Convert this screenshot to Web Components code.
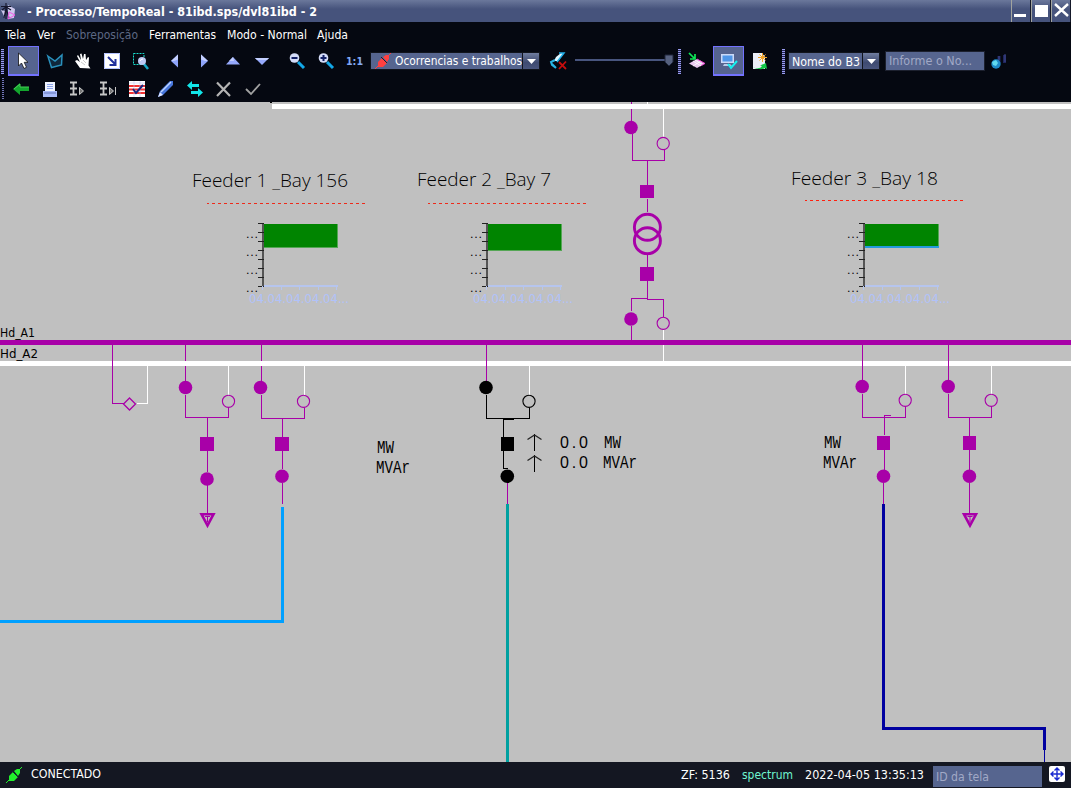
<!DOCTYPE html>
<html lang="pt-BR">
<head>
<meta charset="utf-8">
<title>Processo/TempoReal</title>
<style>
html,body{margin:0;height:100%;overflow:hidden;background:#050811}
</style>
</head>
<body>
<app-window></app-window>
<script>
const UI = '"DejaVu Sans Condensed","DejaVu Sans",sans-serif';

// One line of text fitted to a given width.
const line = (s, x, y, w, size, fill, extra = '', adjust = 'spacingAndGlyphs') =>
  `<text x="${x}" y="${y}" textLength="${w}" lengthAdjust="${adjust}" font-size="${size}" fill="${fill}" ${extra}>${s}</text>`;

class Base extends HTMLElement {
  connectedCallback() {
    if (this.shadowRoot) return;
    this.attachShadow({mode: 'open'}).innerHTML = `<style>${this.css()}</style>${this.html()}`;
  }
  num(n, d = 0) { return this.hasAttribute(n) ? +this.getAttribute(n) : d; }
}

class FitText extends Base {
  css() { return `:host{display:block;flex:none;width:${this.num('w')}px;height:${this.num('h', 22)}px;margin-right:${this.num('gap')}px}
    svg{display:block;overflow:visible;font-family:${UI}}`; }
  html() {
    const bold = this.hasAttribute('bold') ? 'font-weight="bold"' : '';
    return `<svg width="${this.num('w')}" height="${this.num('h', 22)}">${line(this.getAttribute('label'), 0, this.num('base', 16), this.num('w'), this.num('size', 12), this.getAttribute('color') || '#fff', bold)}</svg>`;
  }
}

// Glyphs are drawn on a 16x16 grid.
const lens = '<path d="M9 9l6 6" stroke="#12a8e8" stroke-width="3"/><circle cx="5.500" cy="5" r="4.800" fill="#d4dcf8"/>';
const plug = '<path d="M0 16L4 12M12 4l4-4" stroke="currentColor" stroke-width="1"/><path d="M3 9l4-4 5 5-4 4H3zM8 4l3-2 3 0v4l-2 3z" fill="currentColor"/><path d="M6 4l6 6" stroke="#123" stroke-width="1"/>';
const ICONS = {
  app: '<path d="M8 2l7 4-1 9-6 1zM1 7l4 1v7z" fill="#cdc8ec"/><path d="M1 3.500h10M6 0v16M2 7l4-3 5 3M4 15l2-10 3 10" stroke="#14152a" stroke-width="1.100" fill="none"/><path d="M8 16l7-4-6-3z" stroke="#f05ae4" fill="none"/>',
  cursor: '<path d="M2.500 0v13l3-3 2.500 5.500 2.500-1.200-2.300-5H12z" fill="#fff" stroke="#111" stroke-width=".8"/>',
  lasso: '<path d="M.8 3L8 8l7-6-.5 10-10 2.500z" fill="#10283c" stroke="#2a91bd" stroke-width="1.500"/>',
  hand: '<path d="M5 15L0 8l2-1 3 2L2 3l1-1 3 5-1-6 1.500-.5L8 6l1-5h1.500L11 7l2-3 1 .5-.5 8 2 3z" fill="#fff"/><path d="M6 9l4 3M8 7l3 3" stroke="#aaa" stroke-width=".6"/>',
  box: '<path d="M0 0h16v16H0z" fill="#fff"/><path d="M.5.5h15v15H.5z" fill="none" stroke="#b4c2ff"/><path d="M4 4l7 7M11.500 6v6h-6" stroke="#20309c" stroke-width="2" fill="none"/>',
  region: '<path d="M.5.500h10.500v11H.5z" fill="none" stroke="#18e0d0" stroke-dasharray="2 1"/><path d="M11 11l4 5" stroke="#15a8c8" stroke-width="2.500"/><circle cx="9" cy="8" r="4" fill="#bcc8f4"/><path d="M7 8a3 3 0 0 1 3-2" stroke="#fff" fill="none"/>',
  left: '<path d="M11 1.500v13L4 8z" fill="#8fa4fa"/><path d="M11 1.500v5L7 8 4 8z" fill="#c3cfff"/>',
  right: '<path d="M5 1.500v13L12 8z" fill="#8fa4fa"/><path d="M5 1.500v5L9 8 12 8z" fill="#c3cfff"/>',
  up: '<path d="M1 11.500h14L8 4z" fill="#96a9fc"/><path d="M8 4L4 8h5z" fill="#c3cfff"/>',
  down: '<path d="M1 5h14L8 12z" fill="#96a9fc"/><path d="M1 5h14l-2 2H3z" fill="#c3cfff"/>',
  minus: lens + '<path d="M2.500 5h6" stroke="#111e64" stroke-width="2"/>',
  plus: lens + '<path d="M2.500 5h6M5.500 2v6" stroke="#111e64" stroke-width="2"/>',
  plug,
  pen: '<path d="M5 4l5-4h3L7 8 3 8z" fill="#dff6ff"/><path d="M8 0h5L6 9" stroke="#20aee8" stroke-width="1.500" fill="none"/><path d="M4 7L0 9l1 3 4 3M1 11l4 4" stroke="#27b4e5" stroke-width="2" fill="none"/><path d="M8 9l7 7M15 8.500L8 16" stroke="#c60d0d" stroke-width="1.800"/>',
  layer: '<path d="M0 10.500l8-4.500 8 4.500-8 4.500z" fill="#eac9ef"/><path d="M4 8l8 5M6 7l8 5M4 13l8-5" stroke="#fff" stroke-width=".8"/><path d="M8 6l8 4.500-4 2" stroke="#f044d4" fill="none"/><path d="M0 0l5 5M6 1v5H1" stroke="#0ee957" stroke-width="1.700" fill="none"/>',
  screen: '<path d="M0 1h13v9H0z" fill="#cbd9f7"/><path d="M1.500 2.500h10v6h-10z" fill="#4f96e8"/><path d="M3 11h6l2 2H2z" fill="#b8c8e8"/><path d="M7 11l3 4 6-7" stroke="#14f1ef" stroke-width="2" fill="none"/>',
  page: '<path d="M1 0h9l3 4v12H1z" fill="#eceff8"/><path d="M10.500 0v9M6 4.500h9M7.500 1.500l6 6M13.500 1.500l-6 6" stroke="#f4a425" stroke-width="1"/><path d="M0 14q8 3 10-1l-2-.5 6-2.500 1 6-2-1q-4 3-13-1" fill="#14c747"/>',
  find: '<path d="M6.500 3h3v7h-3zM12 2h3v8h-3z" fill="#20255e"/><path d="M8 3v4M14 1v8" stroke="#3f4b8d"/><circle cx="5" cy="11" r="4.700" fill="#1e8ac8"/><path d="M1 9l4-2 2 3-2 3-3-1z" fill="#60d9ef"/>',
  back: '<path d="M0 8l7-6v4h9v4H7v4z" fill="#13a52d"/><path d="M1 8l6-5v3h9" stroke="#47cf58" fill="none"/>',
  print: '<path d="M3 1h10v10H3z" fill="#eff3ff"/><path d="M5 3.500h6M5 5.500h6M5 7.500h6" stroke="#8ba2eb"/><path d="M1 10h14v6H1z" fill="#a9baf8"/><path d="M2 12h12" stroke="#6476ba"/>',
  tree1: '<path d="M0 1.500h7M0 7.500h7M0 13.500h7M3.500 2v11" stroke="#c8c8c8" stroke-width="1.800" fill="none"/><path d="M9.500 6.500v7l4-3.500z" fill="#777" stroke="#c8c8c8"/>',
  tree2: '<path d="M0 1.500h7M0 7.500h7M0 13.500h7M3.500 2v11" stroke="#c8c8c8" stroke-width="1.800" fill="none"/><path d="M9.500 6.500v7l4-3.500zM15.500 6v8" fill="#777" stroke="#c8c8c8"/>',
  table: '<path d="M0 0h16v16H0z" fill="#fff"/><path d="M0 5h16M0 8.500h16M0 12h16" stroke="#f33232" stroke-width="2"/><path d="M0 2h16M5 0v16M11 0v16" stroke="#c2c8f0" stroke-width=".6"/><path d="M4 8l3 4 7-8" stroke="#18247f" stroke-width="2" fill="none"/>',
  pencil: '<path d="M0 16l2-6L12 0h3v4L5 14z" fill="#4776dc"/><path d="M3 11L13 1" stroke="#bed4ff" stroke-width="1.500"/><path d="M0 16l2-5 3 3z" fill="#dde4ff"/>',
  swap: '<path d="M3 4.500h9M4 11.500h9" stroke="#12e6e9" stroke-width="3" fill="none"/><path d="M0 4.500L5 0v9zM16 11.500L11 7v9z" fill="#12e6e9"/>',
  cross: '<path d="M1 1.500L14 15M14 1.500L1 15" stroke="#b4b4b4" stroke-width="2.200"/>',
  tick: '<path d="M1 8l5 5 9-10" stroke="#a2a2a2" stroke-width="1.800" fill="none"/>',
  move: '<rect width="16" height="16" rx="2" fill="#fff"/><path d="M8 2v12M2 8h12M5.500 4.500L8 2l2.500 2.500M5.500 11.500L8 14l2.500-2.500M4.500 5.500L2 8l2.500 2.500M11.500 5.500L14 8l-2.500 2.500" stroke="#1828d0" stroke-width="1.400" fill="none"/>'
};
class ToolIcon extends Base {
  css() { return `:host{display:flex;box-sizing:border-box;flex:none;width:${this.num('w', 30)}px;height:${this.num('h', 30)}px;align-items:center;justify-content:center}
    :host([on]){background:#56648f;border:1px solid #7372ff;border-bottom-width:2px}
    svg{display:block;overflow:visible}`; }
  html() { return `<svg width="16" height="16" viewBox="0 0 16 16">${ICONS[this.getAttribute('name')]}</svg>`; }
}

class ToolGrip extends Base {
  css() { return `:host{display:block;flex:none;width:3px;height:${this.num('h', 25)}px;background:repeating-linear-gradient(#9a9cf0 0 1px,#22254e 1px 2px)}
    :host([dim]){width:2px;background:repeating-linear-gradient(#7275b8 0 1px,#050811 1px 2px)}`; }
  html() { return ''; }
}

class ComboBox extends Base {
  css() { return `:host{display:flex;flex:none;box-sizing:border-box;height:18px;width:${this.num('w')}px;background:#56658f;border:1px solid #11141c;overflow:hidden;color:#ff4040}
    .v{flex:1;min-width:0;overflow:hidden;display:flex;align-items:center}
    .b{width:16px;display:flex;align-items:center;justify-content:center;border-left:1px solid #11141c;background:linear-gradient(#707d9f,#3e4a70 60%,#49557d)}`; }
  html() { return `<div class="v"><slot></slot></div><div class="b"><svg width="9" height="5"><path d="M0 0h9L4.500 5z" fill="#fff"/></svg></div>`; }
}

class TitleBar extends Base {
  css() { return `:host{display:flex;height:22px;background:linear-gradient(#6b789b,#46537c 9px,#46537c);overflow:hidden}
    .sp{flex:1}.b{box-sizing:border-box;width:20px;height:22px;border-left:1px solid #a2a49f;border-right:1px solid #15192a}
    svg{display:block}`; }
  html() { return `<tool-icon name="app" w="16" h="22"></tool-icon><span style="width:11px"></span>
    <fit-text label="- Processo/TempoReal - 81ibd.sps/dvl81ibd - 2" w="290" base="16" size="12" bold></fit-text><div class="sp"></div>
    <div class="b"><svg width="18" height="22"><path d="M2 14h12v3H2z" fill="#fff"/></svg></div>
    <div class="b"><svg width="18" height="22"><path d="M3 5h13v12H3z" fill="#fff"/></svg></div>
    <div class="b"><svg width="19" height="22"><path d="M3 4l13 12M16 4L3 16" stroke="#fff" stroke-width="2.400"/></svg></div>`; }
}

class MenuBar extends Base {
  css() { return `:host{display:flex;height:24px;padding-left:5px}`; }
  html() {
    return [['Tela', 21, 11], ['Ver', 18, 11], ['Sobreposição', 72, 11, '#5d6884'], ['Ferramentas', 67, 11], ['Modo - Normal', 80, 10], ['Ajuda', 31, 0]]
      .map(([t, w, g, c]) => `<fit-text label="${t}" w="${w}" gap="${g}" base="17" color="${c || '#fff'}"></fit-text>`).join('');
  }
}

class ToolBars extends Base {
  css() { return `:host{display:block}.r{display:flex;height:30px;align-items:center}.r+.r{height:26px}
    .s{flex:none}.sl{flex:none;display:block}.in{box-sizing:border-box;width:100px;height:20px;background:#56658f;border:1px solid #1c202e;padding-left:3px;flex:none}`; }
  html() {
    const sp = w => `<span class="s" style="width:${w}px"></span>`;
    const ic = (n, w, a = '') => `<tool-icon name="${n}" w="${w}" ${a}></tool-icon>`;
    const low = 'h="26"';
    return `<div class="r">${sp(1)}<tool-grip></tool-grip>${sp(4)}${ic('cursor', 31, 'on')}${ic('lasso', 31)}${ic('hand', 26)}${ic('box', 31)}${ic('region', 28)}${sp(5)}${ic('left', 29)}${ic('right', 29)}${ic('up', 29)}${ic('down', 30)}${sp(5)}${ic('minus', 29)}${ic('plus', 29)}${sp(6)}
      <fit-text label="1:1" w="17" h="30" base="19" size="11" color="#82a8f4" bold></fit-text>${sp(7)}
      <combo-box w="170">${ic('plug', 24, 'h="16"')}<fit-text label="Ocorrencias e trabalhos" w="127" h="16" base="12"></fit-text></combo-box>${sp(11)}${ic('pen', 16)}${sp(8)}
      <svg class="sl" width="99" height="30"><path d="M0 13h90v2H0z" fill="#48557e"/><path d="M90 9h8v7l-4 4-4-4z" fill="#56617f" stroke="#20273c"/></svg>${sp(4)}<tool-grip></tool-grip>${sp(8)}${ic('layer', 16)}${sp(8)}${ic('screen', 31, 'on')}${sp(8)}${ic('page', 16)}${sp(14)}<tool-grip></tool-grip>${sp(3)}
      <combo-box w="92">${sp(3)}<fit-text label="Nome do B3" w="68" h="16" base="13"></fit-text></combo-box>${sp(5)}
      <div class="in"><fit-text label="Informe o No..." w="83" h="18" base="13" color="#a1a9c6"></fit-text></div>${sp(6)}${ic('find', 16)}</div>
      <div class="r">${sp(2)}<tool-grip h="22" dim></tool-grip>${sp(2)}${ic('back', 30, low)}${ic('print', 27, low)}${ic('tree1', 30, low)}${ic('tree2', 29, low)}${ic('table', 30, low)}${ic('pencil', 28, low)}${ic('swap', 30, low)}${ic('cross', 28, low)}${ic('tick', 29, low)}</div>`;
  }
}

class NetworkDiagram extends Base {
  css() { return `:host{display:block;height:660px;background:#c0c0c0}svg{display:block}
    .thin{font-family:"Open Sans","Noto Sans",sans-serif;font-weight:300}.mono{font-family:"Liberation Mono",monospace}.num{font-family:"Liberation Sans",sans-serif}`; }
  html() {
    const P = '#a800a8', K = '#000', W = '#fff';
    const R = (x, y, w, h, c = P) => `<rect x="${x}" y="${y}" width="${w}" height="${h}" fill="${c}"/>`;
    const V = (x, y1, y2, c) => R(x, y1, 1, y2 - y1, c);
    const H = (y, x1, x2, c) => R(x1, y, x2 - x1, 1, c);
    const D = (x, y, c = P) => `<circle cx="${x}" cy="${y}" r="6.800" fill="${c}"/>`;
    const O = (x, y, c = P) => `<circle cx="${x}" cy="${y}" r="6.100" fill="none" stroke="${c}" stroke-width="1.100"/>`;
    const ground = (x, y) => `<path d="M${x - 5.500} ${y + 1.200}h12L${x + .5} ${y + 12.500}z" fill="none" stroke="${P}" stroke-width="2.600"/><path d="M${x - 2} ${y + 3.500}h5M${x + .5} ${y + 3}v6" stroke="${P}"/>`;
    // Two disconnectors joined under the buses.
    const fork = (x, y, yj, c = P, cx = x + .5) =>
      D(cx, y, c) + V(x, y + 7.5, yj, c) + H(yj, x, x + 44, c) + V(x + 43, y + 20, yj, c) + V(x + 43, 366, y + 8, W) + O(cx + 43, y + 13.800, c);
    const chart = (dx, bottom, blue) => {
      let s = '';
      s += R(263 + dx, 224, 75, bottom - 224, '#55a655') + R(263 + dx, 224, 74, bottom - 225, '#008400');
      if (blue) s += R(263 + dx, 246, 75, 2, '#249bdc');
      s += R(262 + dx, 223, 2, 64, '#555');
      for (let i = 0; i < 8; i++) s += H(223 + i * 9, 258 + dx, 264 + dx, '#222');
      for (let i = 0; i < 4; i++) s += line('...', 246 + dx, 238 + i * 18, 12, 11, K, 'font-family="DejaVu Sans"', 'spacing');
      s += R(264 + dx, 285, 74, 2, '#b6c5ee');
      for (let i = 0; i < 5; i++) s += R(262 + dx + Math.round(i * 18.600), 286, 1, 4, '#b6c5ee');
      return s + line('04.04.04.04.04...', 249 + dx, 303, 100, 12.500, '#b0c2fa', 'font-family="DejaVu Sans"');
    };
    const dash = (x, y, c) => `<path d="M${x} ${y + .5}h158" stroke="${c}" stroke-dasharray="3 3" stroke-dashoffset="1"/>`;
    const head = (s, x, y, w) => line(s, x, y, w, 17.500, K, 'class="thin"');
    const unit = (s, x, y, w) => line(s, x, y, w, 17.500, K, 'class="mono"');
    const value = (s, x, y, w) => line(s, x, y, w, 16, K, 'class="num"', 'spacing');
    const arrow = y => V(534, y, y + 17, K) + `<path d="M527.500 ${y + 5.500}l7-4.500 7 4.500" fill="none" stroke="#222" stroke-width="1.300"/>`;
    let s = '';
    s += R(272, 104, 799, 5, W) + R(270, 102, 2, 1, K);
    s += V(631, 102, 104) + V(647, 102, 104, W) + V(631, 109, 121) + D(631, 127.500) + V(632, 134, 160) + H(160, 632, 665) + V(664, 149, 160) + V(663, 109, 137, W) + O(663.200, 143.500)
      + V(647, 160, 185) + R(640, 185, 14, 13) + V(647, 199, 212)
      + `<g fill="none" stroke="${P}" stroke-width="2.900"><circle cx="647.400" cy="227.300" r="13"/><circle cx="647.400" cy="240.700" r="13"/></g>`
      + V(647, 255, 267) + R(640, 267, 14, 14) + V(647, 281, 300) + H(298, 631, 648) + H(299, 647, 664) + V(631, 298, 311) + V(663, 299, 317) + D(631, 319) + O(663.200, 323.300) + V(631, 326, 340) + V(663, 330, 361, W);
    s += V(185, 345, 381) + V(261, 345, 381) + R(0, 340, 1071, 5) + R(0, 361, 1071, 5, W);
    s += V(112, 345, 404) + H(403, 112, 124) + `<path d="M129.500 398l6 6-6 6-6-6z" fill="none" stroke="${P}" stroke-width="1.300"/>` + H(403, 137, 148, W) + V(147, 366, 404, W);
    s += fork(185, 387.500, 417) + V(207, 417, 437) + R(200, 437, 14, 14) + V(207, 451, 472) + D(207, 479) + V(207, 485, 513) + ground(207, 513);
    s += fork(261, 387.500, 418, P, 260.500) + V(282, 418, 437) + R(275, 437, 14, 14) + V(282, 451, 469) + D(282, 476.300) + V(282, 483, 504);
    s += R(281, 507, 3, 116, '#00a0ff') + R(0, 620, 284, 3, '#00a0ff');
    s += V(486, 345, 381) + fork(486, 387.500, 418, K, 486) + H(419, 503, 514, K) + V(503, 419, 469, K) + H(468, 503, 508, K) + R(501, 437, 13, 14, K) + D(507.300, 476.300, K) + V(507, 483, 504) + R(506, 504, 3, 258, '#00a0a0');
    s += V(862, 345, 381) + fork(862, 386.500, 417, P, 862.200) + H(415, 884, 891) + V(884, 415, 435) + R(877, 436, 13, 14) + V(884, 450, 470) + D(883.500, 476.300) + V(883, 483, 504);
    s += R(882, 504, 3, 226, '#0000a0') + R(882, 727, 164, 3, '#0000a0') + R(1043, 727, 3, 23, '#0000a0') + V(1044, 750, 762, '#0000a0');
    s += V(948, 345, 381) + fork(948, 386.500, 417, P, 948.200) + V(969, 417, 436) + R(963, 436, 13, 14) + V(969, 450, 470) + D(969.400, 476.300) + V(969, 483, 513) + ground(969.500, 513);
    s += head('Feeder 1 _Bay 156', 192, 187, 156) + head('Feeder 2 _Bay 7', 417, 186, 134) + head('Feeder 3 _Bay 18', 791, 185, 147);
    s += dash(207, 203, '#ee2a1a') + dash(428, 203, '#ee2a1a') + dash(805, 200, '#ff200e');
    s += chart(0, 248) + chart(224, 251) + chart(601, 247, true);
    s += line('Hd_A1', 0, 337, 35, 12, K, 'font-family="DejaVu Sans"') + line('Hd_A2', 0, 358, 38, 12, K, 'font-family="DejaVu Sans"');
    s += unit('MW', 377, 453, 17) + unit('MVAr', 376, 473, 34) + value('0.0', 560, 448, 28) + unit('MW', 604, 448, 17) + value('0.0', 560, 468, 28) + unit('MVAr', 603, 468, 34) + unit('MW', 824, 448, 17) + unit('MVAr', 823, 468, 34);
    s += arrow(434) + arrow(455);
    return `<svg width="1071" height="660" viewBox="0 102 1071 660">${s}</svg>`;
  }
}

class StatusBar extends Base {
  css() { return `:host{display:flex;height:26px;background:#141722;align-items:center;color:#22f02c;box-sizing:border-box;padding-left:6px}
    .sp{flex:1}.in{width:106px;height:21px;background:#56658f;padding-left:3px;margin:3px 7px 0 9px;flex:none}.m{margin:0 6px 2px 0}`; }
  html() { return `<tool-icon name="plug" w="16" h="26"></tool-icon><span style="width:9px"></span>
    <fit-text label="CONECTADO" w="70" h="26" base="16"></fit-text><div class="sp"></div>
    <fit-text label="ZF: 5136" w="49" gap="12" h="26" base="17"></fit-text>
    <fit-text label="spectrum" w="51" gap="12" h="26" base="17" color="#70f5d0"></fit-text>
    <fit-text label="2022-04-05 13:35:13" w="119" h="26" base="17"></fit-text>
    <div class="in"><fit-text label="ID da tela" w="53" h="21" base="15" color="#a1a9c6"></fit-text></div>
    <tool-icon class="m" name="move" w="16" h="22"></tool-icon>`; }
}

class AppWindow extends Base {
  css() { return `:host{display:flex;flex-direction:column;width:1071px;height:788px;background:#050811;overflow:hidden}`; }
  html() { return `<title-bar></title-bar><menu-bar></menu-bar><tool-bars></tool-bars><network-diagram></network-diagram><status-bar></status-bar>`; }
}

Object.entries({'fit-text': FitText, 'tool-icon': ToolIcon, 'tool-grip': ToolGrip, 'combo-box': ComboBox, 'title-bar': TitleBar, 'menu-bar': MenuBar,
  'tool-bars': ToolBars, 'network-diagram': NetworkDiagram, 'status-bar': StatusBar, 'app-window': AppWindow}).forEach(([n, c]) => customElements.define(n, c));
</script>
</body>
</html>
